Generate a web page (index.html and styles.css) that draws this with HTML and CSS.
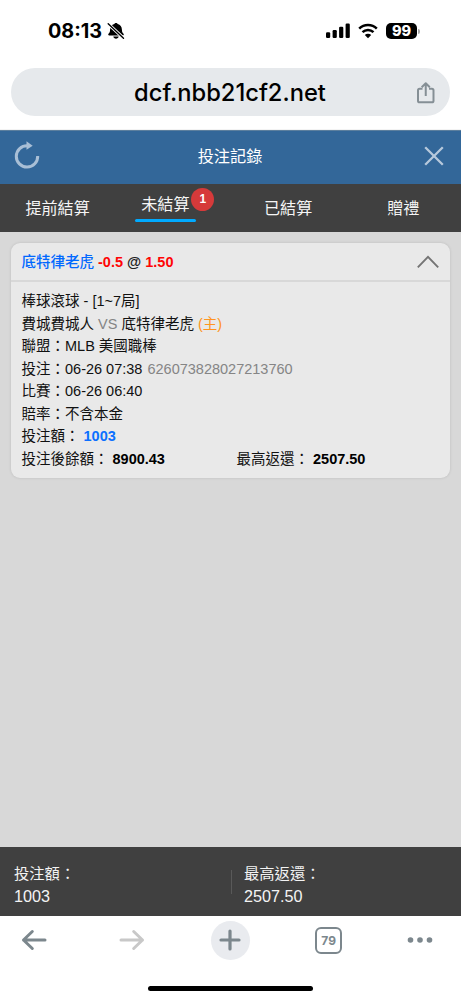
FILE: index.html
```html
<!DOCTYPE html>
<html lang="zh-Hant">
<head>
<meta charset="utf-8">
<meta name="viewport" content="width=device-width, initial-scale=1">
<title>投注記錄</title>
<link rel="stylesheet" href="styles.css">
</head>
<body>
<div class="phone">
  <header class="browser-top">
    <div class="status">
      <span class="clock">08:13</span>
      <svg class="bell" width="18" height="18" viewBox="0 0 18 18">
        <path d="M9 1c.9 0 1.500.5 1.700 1.100 2.700.7 4.100 2.700 4.200 5.300.1 2.600.6 3.300 1.600 4.300.6.700.2 1.800-.8 1.800H2.300c-1 0-1.400-1.100-.8-1.800 1-1 1.500-1.700 1.600-4.300.1-2.600 1.500-4.600 4.200-5.300C7.500 1.500 8.100 1 9 1z"/>
        <path d="M6.300 14.600h5.400c-.3 1.300-1.300 2.100-2.700 2.100s-2.400-.8-2.700-2.100z"/>
        <path d="M1.200 1.800l15.300 14.400" stroke="#fff" stroke-width="3.200"/>
        <path d="M1.200 1.800l15.300 14.400" stroke="#000" stroke-width="1.400" stroke-linecap="round"/>
      </svg>
      <div class="indicators">
        <svg class="signal" width="24" height="16" viewBox="0 0 24 16">
          <rect x="0" y="9.300" width="4.200" height="5.700" rx="1.200"/>
          <rect x="6.600" y="7" width="4.200" height="8" rx="1.200"/>
          <rect x="13.100" y="3.800" width="4.200" height="11.200" rx="1.200"/>
          <rect x="19.600" y=".5" width="4.200" height="14.500" rx="1.200"/>
        </svg>
        <svg class="wifi" width="20" height="16" viewBox="0 0 20 16">
          <path d="M1.200 5.700a12.600 12.600 0 0 1 17.600 0M4.500 9.200a7.900 7.900 0 0 1 11 0" fill="none" stroke="#000" stroke-width="2.500"/>
          <path d="M10 15.200l-3.200-3.200a4.600 4.600 0 0 1 6.400 0z"/>
        </svg>
        <span class="battery">99</span><i class="nub"></i>
      </div>
    </div>
    <div class="address">
      <span class="url">dcf.nbb21cf2.net</span>
      <svg class="share" width="20" height="24" viewBox="0 0 20 24" fill="none" stroke="#858f95" stroke-width="2" stroke-linejoin="round">
        <path d="M6.500 7.800H3.600Q2 7.800 2 9.400v10.300q0 1.600 1.600 1.600h12.300q1.600 0 1.600-1.600V9.400q0-1.600-1.600-1.600H13M9.750 15V2.500M5.700 6.300l4.050-4 4.050 4"/>
      </svg>
    </div>
  </header>

  <div class="titlebar">
    <svg width="30" height="32" viewBox="0 0 30 32">
      <path d="M15.500 5.700A10.700 10.700 0 1 0 25.700 16" fill="none" stroke="#a9bfd6" stroke-width="3"/>
      <path d="M14.500 1.200l6.200 4.600-6.200 4z" fill="#a9bfd6"/>
    </svg>
    <h1 class="title">投注記錄</h1>
    <svg width="22" height="22" viewBox="0 0 22 22">
      <path d="M2.200 2.200l17.600 17.600M19.800 2.200L2.200 19.800" stroke="#b7c9dc" stroke-width="2.300"/>
    </svg>
  </div>

  <nav class="tabs">
    <a class="tab">提前結算</a>
    <a class="tab active"><span class="tab-label">未結算<b class="badge">1</b></span></a>
    <a class="tab">已結算</a>
    <a class="tab">贈禮</a>
  </nav>

  <main class="content">
    <section class="card">
      <div class="card-head">
        <div><span class="team">底特律老虎</span> <b class="red">-0.5</b> <b class="at">@</b> <b class="red">1.50</b></div>
        <svg class="chevron" width="24" height="16" viewBox="0 0 24 16" fill="none" stroke="#747474" stroke-width="1.900"><path d="M1.800 13.300L12 2.900l10.200 10.400"/></svg>
      </div>
      <div class="card-body">
        <div>棒球滾球 - [1~7局]</div>
        <div>費城費城人 <span class="grey">VS</span> 底特律老虎 <span class="host">(主)</span></div>
        <div>聯盟：MLB 美國職棒</div>
        <div>投注：06-26 07:38 <span class="grey order">626073828027213760</span></div>
        <div>比賽：06-26 06:40</div>
        <div>賠率：不含本金</div>
        <div>投注額：<b class="blue value">1003</b></div>
        <div class="pair"><span>投注後餘額：<b class="value">8900.43</b></span><span>最高返還：<b class="value">2507.50</b></span></div>
      </div>
    </section>
  </main>

  <footer class="summary">
    <div class="sum">投注額：<span>1003</span></div>
    <div class="sum second">最高返還：<span>2507.50</span></div>
  </footer>

  <div class="toolbar">
    <svg width="26" height="22" viewBox="0 0 26 22" fill="none" stroke="#7c878d" stroke-width="3" stroke-linecap="round" stroke-linejoin="round"><path d="M24 11H2.500M11.300 2.500L2.500 11l8.800 8.500"/></svg>
    <svg width="26" height="22" viewBox="0 0 26 22" fill="none" stroke="#c8c8c8" stroke-width="3" stroke-linecap="round" stroke-linejoin="round"><path d="M2 11h21.500M14.700 2.500l8.800 8.500-8.800 8.500"/></svg>
    <span class="plus"><svg width="22" height="22" viewBox="0 0 22 22" stroke="#7c878d" stroke-width="3.200" stroke-linecap="round"><path d="M11 2v18M2 11h18"/></svg></span>
    <span class="count">79</span>
    <svg width="26" height="6" viewBox="0 0 26 6" fill="#7c878d"><circle cx="3.500" cy="3" r="2.800"/><circle cx="13" cy="3" r="2.800"/><circle cx="22.500" cy="3" r="2.800"/></svg>
  </div>
  <div class="home"></div>
</div>
</body>
</html>
```
FILE: styles.css
```css
* { box-sizing: border-box; }
body { margin: 0; background: #fff; color: #111; font-family: "Liberation Sans", "Noto Sans CJK TC", sans-serif; }
svg { display: block; flex: none; }
.phone { width: 461px; height: 1000px; display: flex; flex-direction: column; overflow: hidden; }

.browser-top { height: 130px; flex: none; border-bottom: 1px solid #f3f3f3; }
.status { height: 68px; padding: 21px 41px 0 48px; display: flex; align-items: flex-start; color: #000; }
.clock { font: 700 19.8px/21px Inter, sans-serif; width: 59px; white-space: nowrap; }
.bell { margin-top: 1px; }
.indicators { margin-left: auto; display: flex; align-items: center; padding-top: 2px; }
.wifi { margin: 0 8px; }
.battery { width: 31px; height: 16px; border-radius: 5px; background: #000; color: #fff; font: 800 14.5px/16px Inter, sans-serif; text-align: center; }
.nub { width: 2px; height: 5px; margin-left: 1px; border-radius: 0 2px 2px 0; background: #aaa; }
.address { height: 48px; margin: 0 11px; padding: 0 14px 0 33px; border-radius: 24px; background: #e6e9ec; display: flex; align-items: center; }
.url { flex: 1; text-align: center; font: 500 23.7px/47px Inter, sans-serif; color: #000; }
.share { margin-top: 2px; }

.titlebar { height: 54px; flex: none; padding: 0 16px 3px 12px; background: #336799; border-top: 1px solid #5c7f9e; display: grid; grid-template-columns: 30px 1fr 22px; align-items: center; }
.title { margin: 0 0 0 -5px; font-size: 16.200px; line-height: 24px; font-weight: 400; color: #fff; text-align: center; }

.tabs { height: 48px; flex: none; background: #404040; color: #f5f5f5; display: grid; grid-template-columns: repeat(4, 1fr); font-size: 16.100px; }
.tab { height: 48px; line-height: 48px; text-align: center; }
.active { padding-right: 15px; line-height: 41px; }
.tab-label { position: relative; display: inline-block; height: 38px; padding: 0 6px; }
.tab-label::after { content: ""; position: absolute; left: 0; right: 0; bottom: 0; height: 3px; border-radius: 2px; background: #00aaff; }
.badge { position: absolute; left: 56px; top: 4px; width: 23px; height: 23px; border-radius: 50%; background: #d63a3a; color: #fff; font: 700 12px/22px "Liberation Sans", sans-serif; text-align: center; }

.content { flex: 1; background: #d8d8d8; padding: 11px; }
.card { height: 235px; background: #e9e9e9; border-radius: 9px; box-shadow: 0 0 3px rgba(0,0,0,.13); font-size: 14.500px; }
.card-head { height: 39px; padding: 0 10px 2px 10.500px; border-bottom: 2px solid #d8d8d8; display: flex; align-items: center; justify-content: space-between; }
.chevron { margin-top: 2px; }
.team { color: #0068ff; font-weight: 500; }
.red { color: #ff0505; }
.at { color: #222; }
.card-body { padding: 8px 10.500px; line-height: 22.570px; }
.card-body > div { white-space: nowrap; height: 22.570px; }
.grey { color: #858585; }
.host { color: #ff9420; }
.order { margin-left: 1px; }
.blue { color: #0b70ff; }
.value { margin-left: 4px; color: #000; }
.blue.value { color: #0b70ff; }
.pair { display: grid; grid-template-columns: 215px 1fr; }

.summary { height: 69px; flex: none; background: #404040; color: #f3f3f3; display: grid; grid-template-columns: 230.500px 1fr; font-size: 15.300px; line-height: 22px; padding-top: 16px; }
.sum { display: flex; flex-direction: column; padding-left: 14px; }
.sum span { font-size: 16.200px; }
.second { padding-left: 13.500px; background: linear-gradient(#595959, #595959) 0 7px / 1px 24px no-repeat; }

.toolbar { height: 48px; flex: none; margin-left: -15px; display: grid; grid-template-columns: repeat(5, 98.200px); align-items: center; justify-items: center; }
.toolbar > :last-child { margin-right: 14px; }
.plus { width: 39px; height: 39px; border-radius: 50%; background: #e9ebef; display: grid; place-items: center; }
.count { width: 27px; height: 27px; border: 2.500px solid #7c878d; border-radius: 6px; color: #7c878d; font: 700 12px/23px Inter, sans-serif; text-align: center; }
.home { width: 165px; height: 5px; margin: 22px 0 9px 148px; flex: none; border-radius: 3px; background: #000; }
```
